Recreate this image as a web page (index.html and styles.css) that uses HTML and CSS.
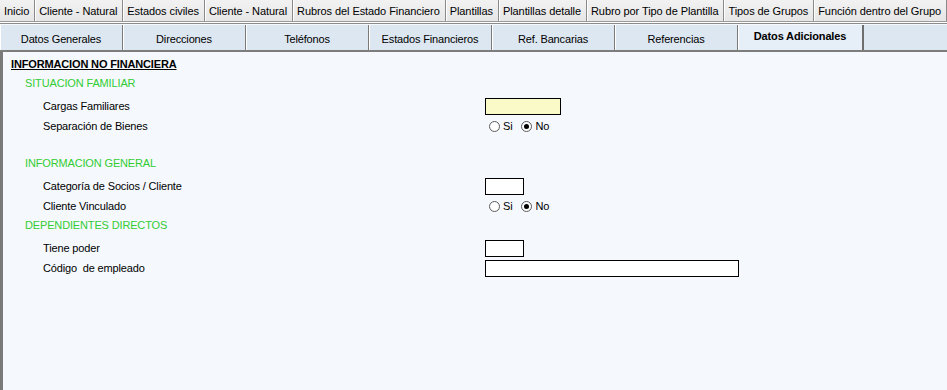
FILE: index.html
```html
<!DOCTYPE html>
<html lang="es">
<head>
    <meta charset="UTF-8">
    <title>Cliente - Datos Adicionales</title>
    <link rel="stylesheet" href="styles.css">
</head>
<body>
    <!-- Pestañas principales -->
    <div class="top-tabs">
        <a class="top-tab" href="#">Inicio</a>
        <a class="top-tab" href="#">Cliente - Natural</a>
        <a class="top-tab" href="#">Estados civiles</a>
        <a class="top-tab" href="#">Cliente - Natural</a>
        <a class="top-tab" href="#">Rubros del Estado Financiero</a>
        <a class="top-tab" href="#">Plantillas</a>
        <a class="top-tab" href="#">Plantillas detalle</a>
        <a class="top-tab" href="#">Rubro por Tipo de Plantilla</a>
        <a class="top-tab" href="#">Tipos de Grupos</a>
        <a class="top-tab" href="#">Función dentro del Grupo</a>
    </div>

    <!-- Pestañas del cliente -->
    <div class="sub-tabs">
        <div class="sub-tab">Datos Generales</div>
        <div class="sub-tab">Direcciones</div>
        <div class="sub-tab">Teléfonos</div>
        <div class="sub-tab">Estados Financieros</div>
        <div class="sub-tab">Ref. Bancarias</div>
        <div class="sub-tab">Referencias</div>
        <div class="sub-tab active">Datos Adicionales</div>
    </div>

    <div class="panel">
        <div class="title">INFORMACION NO FINANCIERA</div>

        <div class="section">SITUACION FAMILIAR</div>
        <div class="field">
            <span class="label">Cargas Familiares</span>
            <input type="text" class="txt txt-mid txt-yellow">
        </div>
        <div class="field">
            <span class="label">Separación de Bienes</span>
            <span class="radios">
                <label><input type="radio" name="separacion"> Si</label>
                <label><input type="radio" name="separacion" checked> No</label>
            </span>
        </div>

        <div class="section spaced">INFORMACION GENERAL</div>
        <div class="field">
            <span class="label">Categoría de Socios / Cliente</span>
            <input type="text" class="txt txt-short">
        </div>
        <div class="field">
            <span class="label">Cliente Vinculado</span>
            <span class="radios">
                <label><input type="radio" name="vinculado"> Si</label>
                <label><input type="radio" name="vinculado" checked> No</label>
            </span>
        </div>

        <div class="section">DEPENDIENTES DIRECTOS</div>
        <div class="field">
            <span class="label">Tiene poder</span>
            <input type="text" class="txt txt-short">
        </div>
        <div class="field">
            <span class="label">Código&nbsp; de empleado</span>
            <input type="text" class="txt txt-long">
        </div>
    </div>
</body>
</html>
```

FILE: styles.css
```css
body {
    margin: 0;
    padding: 0;
    background-color: #f5f9fd;
    color: #000;
    font-family: "Liberation Sans", Arial, sans-serif;
    font-size: 11px;
    letter-spacing: -0.15px;
    height: 390px;
    overflow: hidden;
}

/* Pestañas principales */
.top-tabs {
    display: flex;
    height: 21px;
    background: linear-gradient(#f2f2f2, #e6e6e6);
    border-bottom: 1px solid #9a9a9a;
    box-shadow: 0 1px 0 #ffffff, 0 2px 0 #8c8c8c;
    white-space: nowrap;
    overflow: hidden;
}
.top-tab {
    display: flex;
    align-items: center;
    padding: 0 5px 0 4px;
    color: #000;
    text-decoration: none;
    letter-spacing: -0.08px;
    border-right: 1px solid #8a8a8a;
    box-shadow: 1px 0 0 #ffffff;
}

/* Pestañas del cliente */
.sub-tabs {
    display: flex;
    margin-top: 3px;
    height: 25px;
    background-color: #dde7f1;
    border-bottom: 2px solid #7d7d7d;
}
.sub-tab {
    width: 122px;
    display: flex;
    align-items: center;
    justify-content: center;
    padding-top: 2px;
    border-right: 1px solid #7a7a7a;
    box-shadow: inset 1px 0 0 #ffffff;
}
.sub-tab.active {
    width: 124px;
    background-color: #e6eef7;
    font-weight: bold;
    padding-top: 0;
    padding-bottom: 3px;
    border-right: 2px solid #6e6e6e;
    box-shadow: inset 1px 0 0 #ffffff;
}

/* Panel de contenido */
.panel {
    border-left: 3px solid #7a7a7a;
    height: 340px;
    padding-top: 3px;
}
.title {
    height: 19px;
    line-height: 18px;
    padding-left: 8px;
    font-weight: bold;
    text-decoration: underline;
}
.section {
    height: 18px;
    line-height: 18px;
    padding-left: 22px;
    margin-bottom: 4px;
    color: #33cc33;
}
.section.spaced {
    margin-top: 18px;
}
.field {
    display: grid;
    grid-template-columns: 482px 1fr;
    align-items: center;
    height: 20px;
}
.label {
    padding-left: 40px;
}

.txt {
    box-sizing: border-box;
    height: 17px;
    margin: 0;
    padding: 0 2px;
    border: 1px solid #000;
    background-color: #fff;
    font: inherit;
}
.txt-short {
    width: 39px;
}
.txt-mid {
    width: 76px;
}
.txt-long {
    width: 254px;
}
.txt-yellow {
    background-color: #fafac9;
}

.radios {
    display: flex;
    align-items: center;
    gap: 9px;
    padding-left: 4px;
}
.radios label {
    display: flex;
    align-items: center;
    gap: 3px;
}
.radios input {
    appearance: none;
    -webkit-appearance: none;
    width: 11px;
    height: 11px;
    margin: 0;
    border: 1px solid #5a5a5a;
    border-radius: 50%;
    background-color: #fff;
    display: grid;
    place-content: center;
}
.radios input:checked::before {
    content: "";
    width: 5px;
    height: 5px;
    border-radius: 50%;
    background-color: #000;
}
```
